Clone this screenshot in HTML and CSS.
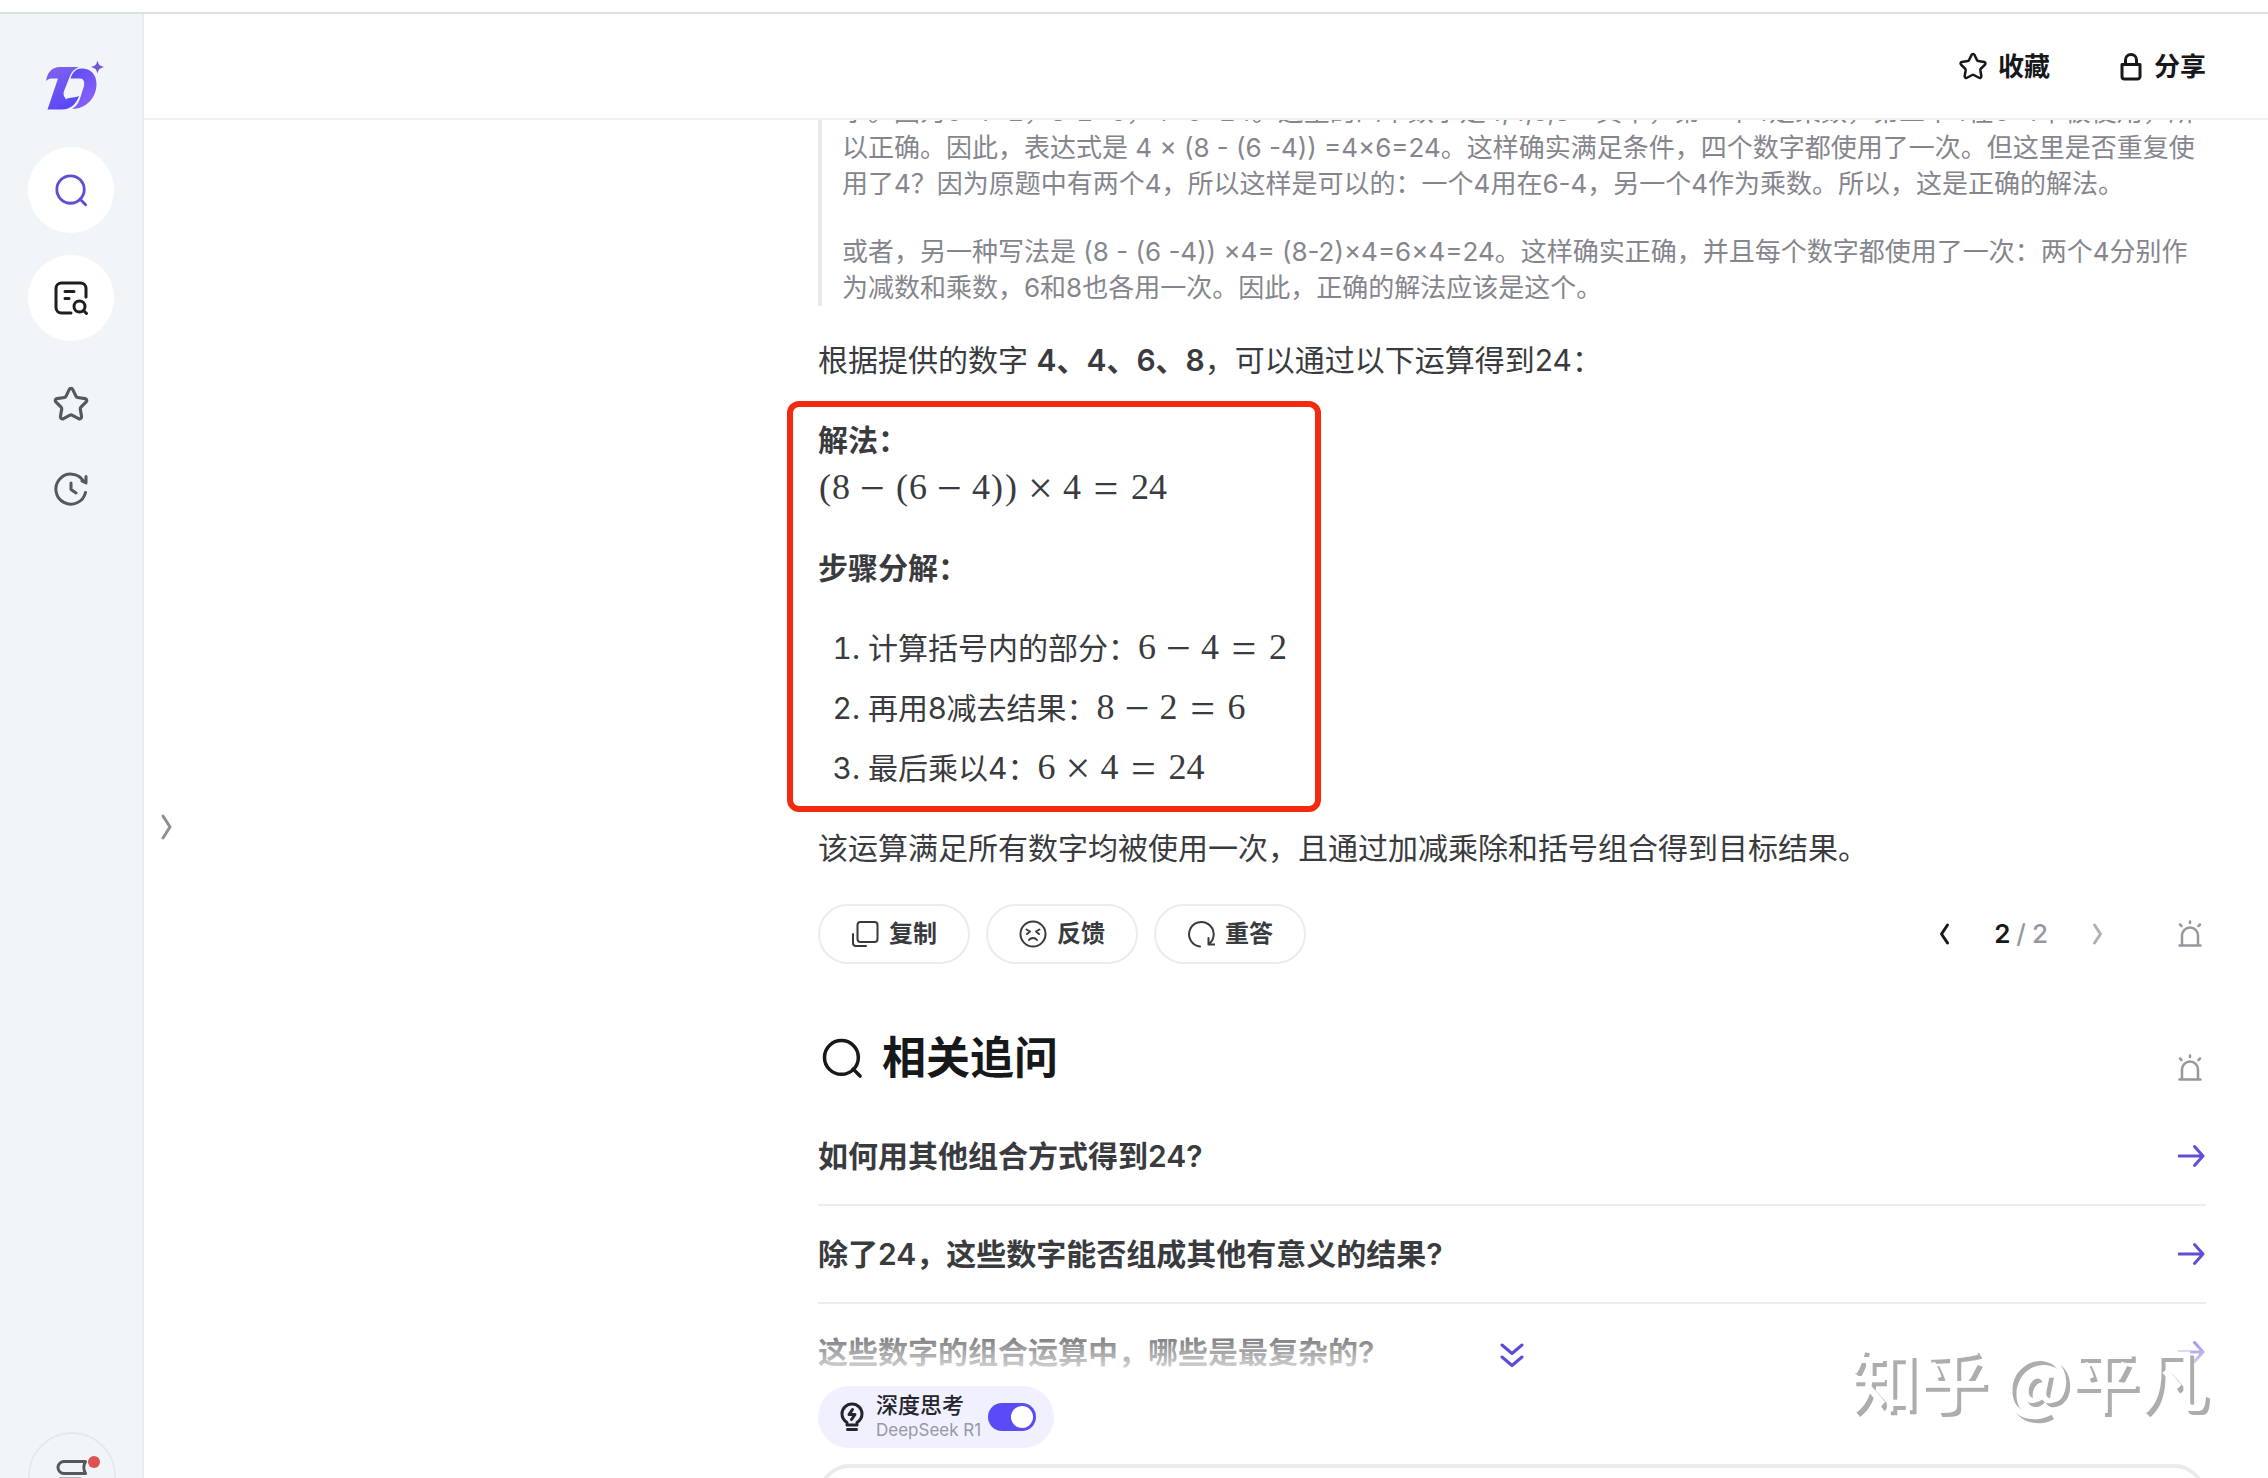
FILE: index.html
```html
<!DOCTYPE html>
<html lang="zh-CN">
<head>
<meta charset="utf-8">
<title>深度思考</title>
<link rel="stylesheet" href="styles.css">
</head>
<body>
<svg class="defs" aria-hidden="true">
  <symbol id="star" viewBox="0 0 36 36"><path d="M16.3 3.4c.7-1.5 2.7-1.5 3.4 0l3.1 6.4c.3.6.8 1 1.5 1.1l7 1c1.6.2 2.2 2.1 1.1 3.2l-5 5c-.5.5-.7 1.1-.6 1.800l1.200 7.000c.3 1.600-1.400 2.800-2.800 2.000l-6.300-3.300c-.6-.3-1.200-.3-1.800 0l-6.300 3.300c-1.400.8-3.100-.4-2.800-2l1.200-7c.1-.7-.1-1.300-.6-1.800l-5-5c-1.100-1.100-.5-3 1.100-3.200l7-1c.7-.1 1.200-.5 1.500-1.100z"/></symbol>
  <symbol id="search" viewBox="0 0 36 36"><circle cx="17.500" cy="17.500" r="14.500"/><path d="M27.500 27.500l6 6"/></symbol>
  <symbol id="siren" viewBox="0 0 24 28"><path stroke-width="2.500" d="M4 25.500V15.500a8 8 0 0 1 16 0v10M1.500 25.500h21M12 1.500v1.500M2 4.500l1.500 1.500M22 4.500l-1.500 1.500"/></symbol>
  <symbol id="arrow" viewBox="0 0 28 24"><path d="M1 12h24M16.500 2.500l8.500 9.500-8.500 9.500"/></symbol>
</svg>
<div class="app">
  <nav class="sidebar">
    <a class="logo" href="#" aria-label="首页">
      <svg viewBox="46 60 60 51" width="60" height="51">
        <defs><linearGradient id="lg" x1="0" y1="0" x2="0.300" y2="1"><stop offset="0" stop-color="#8163ee"/><stop offset="1" stop-color="#5b49f5"/></linearGradient>
        <linearGradient id="lg2" x1="0" y1="0" x2="0.600" y2="1"><stop offset="0" stop-color="#5a4af3"/><stop offset="1" stop-color="#8a63fb"/></linearGradient></defs>
        <path fill="url(#lg)" d="M47 81C48.500 72 53 67 61 67H80C75 69 72.500 72 71 76L65 91C63.500 96 66 97 67 99.500C69 97 74 98.500 80 96C77 104 72 109.500 63 109.500H48.500L59 78.500H54C51 78.500 49 79 47 81Z"/>
        <path fill="url(#lg2)" d="M71.500 78.500C74 71 78 68 84 68.500C92 69 97.500 75 97.500 84C97.500 98 87 109 73 109C78 106 80 102 81.500 97L85 86C86 82 84.500 78.500 81 78.500Z"/>
        <path fill="#7455d8" d="M98.500 60.500C99.800 65 100.500 65.700 105 67C100.500 68.300 99.800 69 98.500 73.500C97.200 69 96.500 68.300 92 67C96.500 65.700 97.200 65 98.500 60.500Z"/>
      </svg>
    </a>
    <button class="round accent" aria-label="搜索"><svg class="ic" width="34" height="34"><use href="#search"/></svg></button>
    <button class="round" aria-label="研究"><svg class="ic" width="36" height="36" viewBox="0 0 36 36"><path d="M18 33H8.500a5.500 5.500 0 0 1-5.500-5.500V8.500A5.500 5.500 0 0 1 8.500 3h19a5.500 5.500 0 0 1 5.500 5.500V17M12 11.500h9M12 18.500h4"/><circle cx="26.500" cy="26.500" r="5.500"/><path d="M30.500 30.500l3 3"/></svg></button>
    <button class="plain" aria-label="收藏夹"><svg class="ic" width="38" height="38"><use href="#star"/></svg></button>
    <button class="plain" aria-label="历史"><svg class="ic" width="36" height="36" viewBox="0 0 36 36"><path d="M32.500 21.500A15 15 0 1 1 30.500 10M33 5.500v6.500l-4-2M18 12v6.500l5 3.500"/></svg></button>
    <button class="help" aria-label="指南"><svg class="ic" width="32" height="26" viewBox="0 0 32 26"><path d="M29.500 2.500H8a6 6 0 0 0 0 12h21.500c-2-3.500-2-8.500 0-12z"/><path class="pale" d="M4 19.500h20"/></svg><span class="dot"></span></button>
  </nav>
  <main class="main">
    <header class="topbar">
      <button class="link"><svg class="ic" width="30" height="30"><use href="#star"/></svg>收藏</button>
      <button class="link"><svg class="ic" width="26" height="30" viewBox="0 0 24 30"><path d="M3 12.500h18v12a2.500 2.500 0 0 1-2.500 2.500h-13a2.500 2.500 0 0 1-2.500-2.500zM6.500 12V8a5.500 5.500 0 0 1 11 0v4"/></svg>分享</button>
    </header>
    <button class="expand" aria-label="展开"><svg class="ic" width="14" height="28" viewBox="0 0 14 28"><path d="M3 3l7 11-7 11"/></svg></button>
    <div class="scroller">
      <article class="answer">
        <blockquote>
          <p>字。因为6-4=2，8-2=6，4×6=24。这里的四个数字是4,4,6,8一其中，第一个4是乘数，第二个4在6-4中被使用，所<br>以正确。因此，表达式是 4 × (8 - (6 -4)) =4×6=24。这样确实满足条件，四个数字都使用了一次。但这里是否重复使<br>用了4？因为原题中有两个4，所以这样是可以的：一个4用在6-4，另一个4作为乘数。所以，这是正确的解法。</p>
          <p>或者，另一种写法是 (8 - (6 -4)) ×4= (8-2)×4=6×4=24。这样确实正确，并且每个数字都使用了一次：两个4分别作<br>为减数和乘数，6和8也各用一次。因此，正确的解法应该是这个。</p>
        </blockquote>
        <p class="lead">根据提供的数字 <strong>4、4、6、8</strong>，可以通过以下运算得到24：</p>
        <section class="marked">
          <p><strong>解法：</strong><br><span class="math"><b>(</b>8<i>−</i><b>(</b>6<i>−</i>4<b>)</b><b>)</b><i>×</i>4<i class="eq">=</i>24</span></p>
          <p><strong>步骤分解：</strong></p>
          <ol>
            <li>计算括号内的部分：<span class="math">6<i>−</i>4<i class="eq">=</i>2</span></li>
            <li>再用8减去结果：<span class="math">8<i>−</i>2<i class="eq">=</i>6</span></li>
            <li>最后乘以4：<span class="math">6<i>×</i>4<i class="eq">=</i>24</span></li>
          </ol>
        </section>
        <p>该运算满足所有数字均被使用一次，且通过加减乘除和括号组合得到目标结果。</p>
        <div class="actions">
          <button class="pill"><svg class="ic" width="28" height="28" viewBox="0 0 28 28"><rect x="6.500" y="2" width="20" height="20" rx="3"/><path d="M2 14v9a3 3 0 0 0 3 3h10"/></svg>复制</button>
          <button class="pill"><svg class="ic" width="28" height="28" viewBox="0 0 28 28"><circle cx="14" cy="14" r="12.500"/><path d="M7.500 9.500l3.500 2-3 2.500M20.500 9.500l-3.500 2 3 2.500M10 20a5 5 0 0 1 8 0"/></svg>反馈</button>
          <button class="pill"><svg class="ic" width="28" height="28" viewBox="0 0 28 28"><path d="M13 26.500A12.300 12.300 0 1 1 22.500 23.500M21.500 18v6.500h6.500"/></svg>重答</button>
          <div class="pager">
            <button aria-label="上一个"><svg class="ic" width="12" height="24" viewBox="0 0 12 24"><path d="M9.500 3L3.500 12l6 9"/></svg></button>
            <span class="count"><b>2</b><span>/</span><span>2</span></span>
            <button class="off" aria-label="下一个"><svg class="ic" width="12" height="24" viewBox="0 0 12 24"><path d="M2.500 3l6 9-6 9"/></svg></button>
          </div>
          <button class="report" aria-label="举报"><svg class="ic" width="24" height="28"><use href="#siren"/></svg></button>
        </div>
        <div class="related">
          <svg class="ic" width="42" height="42"><use href="#search"/></svg>
          <h2>相关追问</h2>
          <button class="report" aria-label="举报"><svg class="ic" width="24" height="28"><use href="#siren"/></svg></button>
        </div>
        <ul class="questions">
          <li><a href="#">如何用其他组合方式得到24?<svg class="ic" width="28" height="24"><use href="#arrow"/></svg></a></li>
          <li><a href="#">除了24，这些数字能否组成其他有意义的结果?<svg class="ic" width="28" height="24"><use href="#arrow"/></svg></a></li>
          <li><a href="#">这些数字的组合运算中，哪些是最复杂的?<svg class="ic" width="28" height="24"><use href="#arrow"/></svg></a></li>
        </ul>
      </article>
    </div>
    <footer class="composer">
      <div class="fade"></div>
      <div class="tools">
        <label class="think">
          <svg class="ic" width="24" height="32" viewBox="0 0 24 32"><path d="M7 24v-2.500C4 19.500 2 16.500 2 13a10 10 0 0 1 20 0c0 3.500-2 6.500-5 8.500V24zM7.500 28.500h9M12.500 8.500L9 13.500h6l-3.500 5"/></svg>
          <span class="names"><span>深度思考</span><small>DeepSeek R1</small></span>
          <input type="checkbox" checked>
        </label>
      </div>
      <textarea class="ask" aria-label="提问"></textarea>
      <button class="down" aria-label="到底部"><svg class="ic" width="24" height="26" viewBox="0 0 24 26"><path d="M2 3l10 8.500L22 3M2 15l10 8.500L22 15"/></svg></button>
    </footer>
  </main>
</div>
<div class="watermark">知乎 @平凡</div>
</body>
</html>
```
FILE: styles.css
```css
* { box-sizing: border-box; }
body {
  margin: 0;
  height: 100vh;
  overflow: hidden;
  padding-top: 12px;
  background: #fff;
  color: #3a3b3e;
  font: 30px/48px Inter, "Noto Sans CJK SC", sans-serif;
}
p, h2, ul, ol, blockquote { margin: 0; padding: 0; }
button { border: 0; padding: 0; background: none; font: inherit; color: inherit; display: flex; align-items: center; justify-content: center; }
a { color: inherit; text-decoration: none; }
strong { font-weight: 600; }
.defs { position: absolute; width: 0; height: 0; }
.ic { display: block; flex: none; fill: none; stroke: currentColor; stroke-width: 2; stroke-linecap: round; stroke-linejoin: round; }

.app { display: flex; height: 100%; border-top: 2px solid #dfe0e0; }

.sidebar {
  position: relative;
  width: 144px;
  flex: none;
  display: flex;
  flex-direction: column;
  align-items: center;
  padding-top: 46px;
  background: #f1f5f8;
  border-right: 2px solid #e9ecef;
  color: #55585c;
}
.logo { display: block; height: 51px; margin: 0 0 36px 8px; }
.logo svg { display: block; }
.round { width: 86px; height: 86px; margin-bottom: 22px; border-radius: 50%; background: #fff; color: #1d1e20; }
.round .ic { stroke-width: 3; }
.round.accent { color: #5f4fd6; }
.plain { width: 84px; height: 84px; }
.plain .ic { stroke-width: 3; }
.help { position: absolute; top: 1418px; left: 28px; width: 88px; height: 88px; border: 2px solid #e6e9ec; border-radius: 50%; }
.help .ic { stroke-width: 3; margin-bottom: 8px; }
.help .pale { opacity: .4; }
.dot { position: absolute; top: 22px; left: 58px; width: 12px; height: 12px; border-radius: 50%; background: #e05252; }

.main { position: relative; flex: 1; min-width: 0; display: flex; flex-direction: column; }
.topbar {
  flex: none;
  height: 106px;
  padding: 2px 62px 0 0;
  display: flex;
  justify-content: flex-end;
  gap: 68px;
  border-bottom: 2px solid #f0f0f1;
  color: #17181a;
}
.link { gap: 10px; font-size: 26px; font-weight: 600; }
.link .ic { stroke-width: 3; }
.expand { position: absolute; top: 799px; left: 16px; color: #8d9094; }
.expand .ic { stroke-width: 3; }

.scroller { flex: 1; min-height: 0; overflow: hidden; padding-right: 62px; }
.answer { max-width: 1388px; margin: -26px 0 0 auto; }
blockquote { border-left: 4px solid #e9e9ec; padding-left: 20px; color: #85868d; font-size: 26px; line-height: 36px; white-space: nowrap; }
blockquote p + p { margin-top: 32px; }
.lead { margin-top: 30px; }
.marked {
  width: 534px;
  margin: 17px 0 12px -31px;
  padding: 9px 0 14px 25px;
  border: 6px solid #f22a10;
  border-radius: 12px;
}
.marked p { margin-bottom: 32px; }
.marked ol { padding-left: 50px; display: grid; gap: 12px; }
.math { font: 36px/24px "Liberation Serif", serif; white-space: nowrap; }
.math b { display: inline-block; width: 14px; font-weight: 400; text-align: center; }
.math i { display: inline-block; width: 45px; font-size: 44px; font-style: normal; text-align: center; vertical-align: -4px; }
.math .eq { width: 50px; }

.actions { display: flex; align-items: center; gap: 16px; margin-top: 32px; }
.pill { width: 152px; height: 60px; gap: 10px; border: 2px solid #ececed; border-radius: 30px; font-size: 24px; font-weight: 600; }
.pill .ic { stroke-width: 2; }
.pager { display: flex; align-items: center; gap: 44px; margin-left: auto; font-size: 26px; }
.pager .ic { stroke-width: 3; }
.pager button { color: #17181a; }
.pager .off { color: #b0b1b6; }
.count { display: flex; gap: 6px; color: #97989e; font-weight: 500; }
.count b { color: #17181a; font-weight: 600; }
.report { color: #97989e; margin-left: 54px; width: 32px; }

.related { display: flex; align-items: center; height: 62px; margin-top: 63px; gap: 19px; color: #17181a; }
.related > .ic { margin-left: 3px; stroke-width: 3; }
.related h2 { font-size: 44px; line-height: 62px; font-weight: 600; }
.related .report { margin-left: auto; align-self: flex-end; height: 42px; }
.questions { list-style: none; margin-top: 19px; }
.questions li { border-bottom: 2px solid #ececee; }
.questions a { display: flex; align-items: center; justify-content: space-between; height: 96px; font-weight: 600; }
.questions .ic { color: #5f4fd6; stroke-width: 3; }

.composer { position: absolute; left: 0; right: 0; bottom: 0; display: flex; flex-direction: column; align-items: flex-end; padding-right: 62px; overflow: hidden; }
.fade { align-self: stretch; height: 50px; margin-right: -62px; background: linear-gradient(rgba(255,255,255,.1), rgba(255,255,255,.8)); }
.tools { width: 100%; max-width: 1388px; height: 94px; padding-top: 16px; background: #fff; }
.think { display: inline-flex; align-items: center; width: 236px; height: 62px; padding: 0 18px 0 22px; border-radius: 31px; background: #f1f0fe; }
.think .ic { color: #24242c; stroke-width: 3; }
.names { display: grid; margin-left: 12px; color: #24242c; font-size: 22px; line-height: 26px; font-weight: 500; white-space: nowrap; }
.names small { color: #9797a8; font-size: 17px; line-height: 24px; font-weight: 400; }
.think input { appearance: none; flex: none; margin: 0 0 0 auto; width: 48px; height: 28px; padding: 3px; border-radius: 14px; background: #5a4bf5; display: flex; justify-content: flex-end; }
.think input::before { content: ""; width: 22px; height: 22px; border-radius: 50%; background: #fff; }
.ask { width: 100%; max-width: 1388px; height: 114px; margin-bottom: -100px; border: 4px solid #ebebeb; border-radius: 32px; background: #fff; resize: none; outline: 0; overflow: hidden; }
.down { position: absolute; right: 744px; top: 22px; color: #5a4bdc; }
.down .ic { stroke-width: 3; }

.watermark { position: absolute; right: 60px; bottom: 51px; font-size: 69px; line-height: 100px; font-family: "Noto Sans CJK SC", sans-serif; font-weight: 500; color: #fff; text-shadow: 4px 4px 0 #adadad; pointer-events: none; }
```
